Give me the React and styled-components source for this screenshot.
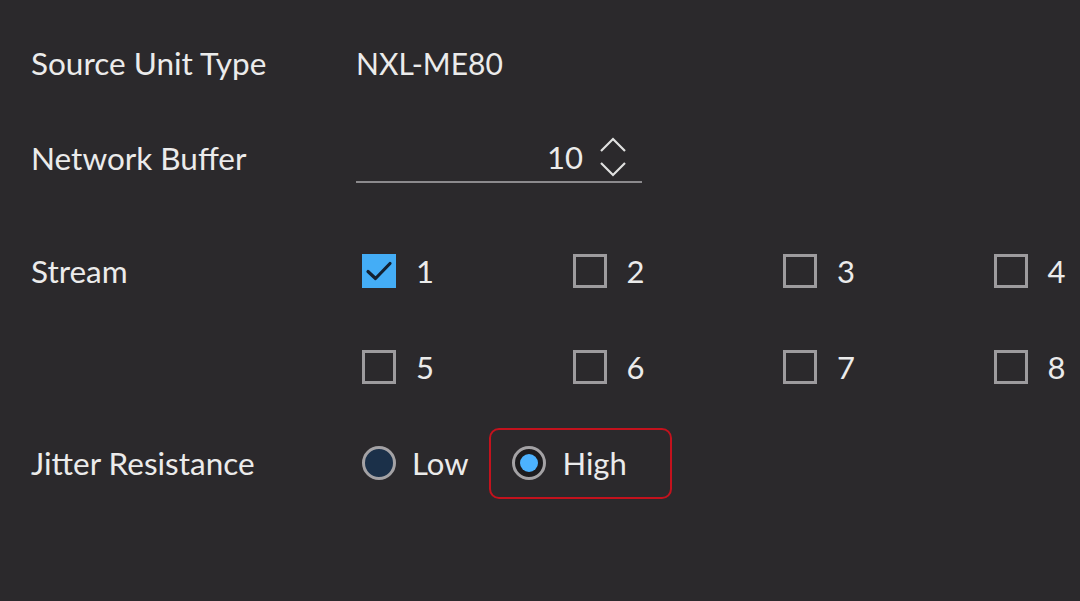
import React, { useState } from "react";
import styled, { createGlobalStyle } from "styled-components";

const GlobalStyle = createGlobalStyle`
    html, body {
        margin: 0;
        padding: 0;
        background: #2b292c;
        overflow: hidden;
    }
    body {
        font-family: Lato, "Open Sans", sans-serif;
        color: #ebebeb;
    }
`;

const Page = styled.div`
    width: 1080px;
    height: 601px;
    padding-left: 31px;
    box-sizing: border-box;
    overflow: hidden;
`;

const Row = styled.div`
    display: grid;
    grid-template-columns: 325px 1fr;
    align-items: ${(p) => (p.top ? "start" : "center")};
    height: ${(p) => p.h}px;
    margin-top: ${(p) => p.mt || 0}px;
`;

const Label = styled.div`
    font-size: 31.5px;
    line-height: ${(p) => p.lh || 36}px;
    white-space: nowrap;
`;

const Value = styled.div`
    font-size: 30px;
    line-height: 36px;
`;

const NumberField = styled.div`
    width: 286px;
    height: 50px;
    box-sizing: border-box;
    border-bottom: 2px solid #8c8a8d;
    display: flex;
    align-items: center;
    justify-content: flex-end;
    gap: 16px;
    padding-right: 15px;
    font-size: 31px;
`;

const Spinner = styled.svg`
    width: 28px;
    height: 42px;
    display: block;
`;

const Controls = styled.div`
    padding-left: 6px;
`;

const CheckGrid = styled.div`
    display: grid;
    grid-template-columns: repeat(4, 210.5px);
    grid-auto-rows: 96px;
    align-items: center;
`;

const Option = styled.label`
    display: flex;
    align-items: center;
    gap: ${(p) => p.gap || 20}px;
    font-size: 31px;
    cursor: pointer;
`;

const Box = styled.span`
    width: 34px;
    height: 34px;
    box-sizing: border-box;
    border: 3px solid ${(p) => (p.checked ? "#44adf6" : "#9d9b9e")};
    background: ${(p) => (p.checked ? "#44adf6" : "transparent")};
    display: flex;
    align-items: center;
    justify-content: center;
    flex-shrink: 0;
`;

const RadioGroup = styled.div`
    display: flex;
    align-items: center;
    gap: 21px;
`;

const RadioOption = styled(Option)`
    height: 71px;
    box-sizing: border-box;
    padding: ${(p) => (p.highlight ? "0 43px 0 21px" : "0")};
    border: ${(p) => (p.highlight ? "2px solid #c3121d" : "none")};
    border-radius: 10px;
    gap: 16px;
`;

const Circle = styled.span`
    width: 34px;
    height: 34px;
    box-sizing: border-box;
    border-radius: 50%;
    border: 3px solid #a4a2a5;
    background: ${(p) => (p.checked ? "#1d1c1f" : "#1b3049")};
    display: flex;
    align-items: center;
    justify-content: center;
    flex-shrink: 0;
    &::after {
        content: "";
        width: 18px;
        height: 18px;
        border-radius: 50%;
        background: ${(p) => (p.checked ? "#4cb2ff" : "transparent")};
    }
`;

const Check = () => (
    <svg width="28" height="24" viewBox="0 0 28 24">
        <path
            d="M3 12.5 L10.5 19.5 L25 4.5"
            fill="none"
            stroke="#132131"
            strokeWidth="3.2"
            strokeLinecap="round"
            strokeLinejoin="round"
        />
    </svg>
);

export default function App() {
    const [streams, setStreams] = useState([1]);
    const [jitter, setJitter] = useState("high");

    const toggle = (n) =>
        setStreams((s) => (s.includes(n) ? s.filter((x) => x !== n) : [...s, n]));

    return (
        <Page>
            <GlobalStyle />
            <Row h={126}>
                <Label>Source Unit Type</Label>
                <Value>NXL-ME80</Value>
            </Row>
            <Row h={64}>
                <Label>Network Buffer</Label>
                <NumberField>
                    <span>10</span>
                    <Spinner viewBox="0 0 28 42">
                        <path
                            d="M2 15 L14 3 L26 15"
                            fill="none"
                            stroke="#e0e0e0"
                            strokeWidth="2.2"
                        />
                        <path
                            d="M2 27 L14 39 L26 27"
                            fill="none"
                            stroke="#e0e0e0"
                            strokeWidth="2.2"
                        />
                    </Spinner>
                </NumberField>
            </Row>
            <Row h={192} mt={33} top>
                <Label lh={96}>Stream</Label>
                <Controls>
                    <CheckGrid>
                        {[1, 2, 3, 4, 5, 6, 7, 8].map((n) => (
                            <Option key={n} onClick={() => toggle(n)}>
                                <Box checked={streams.includes(n)}>
                                    {streams.includes(n) && <Check />}
                                </Box>
                                {n}
                            </Option>
                        ))}
                    </CheckGrid>
                </Controls>
            </Row>
            <Row h={96}>
                <Label>Jitter Resistance</Label>
                <Controls>
                    <RadioGroup>
                        <RadioOption onClick={() => setJitter("low")}>
                            <Circle checked={jitter === "low"} />
                            Low
                        </RadioOption>
                        <RadioOption
                            highlight
                            onClick={() => setJitter("high")}
                        >
                            <Circle checked={jitter === "high"} />
                            High
                        </RadioOption>
                    </RadioGroup>
                </Controls>
            </Row>
        </Page>
    );
}
